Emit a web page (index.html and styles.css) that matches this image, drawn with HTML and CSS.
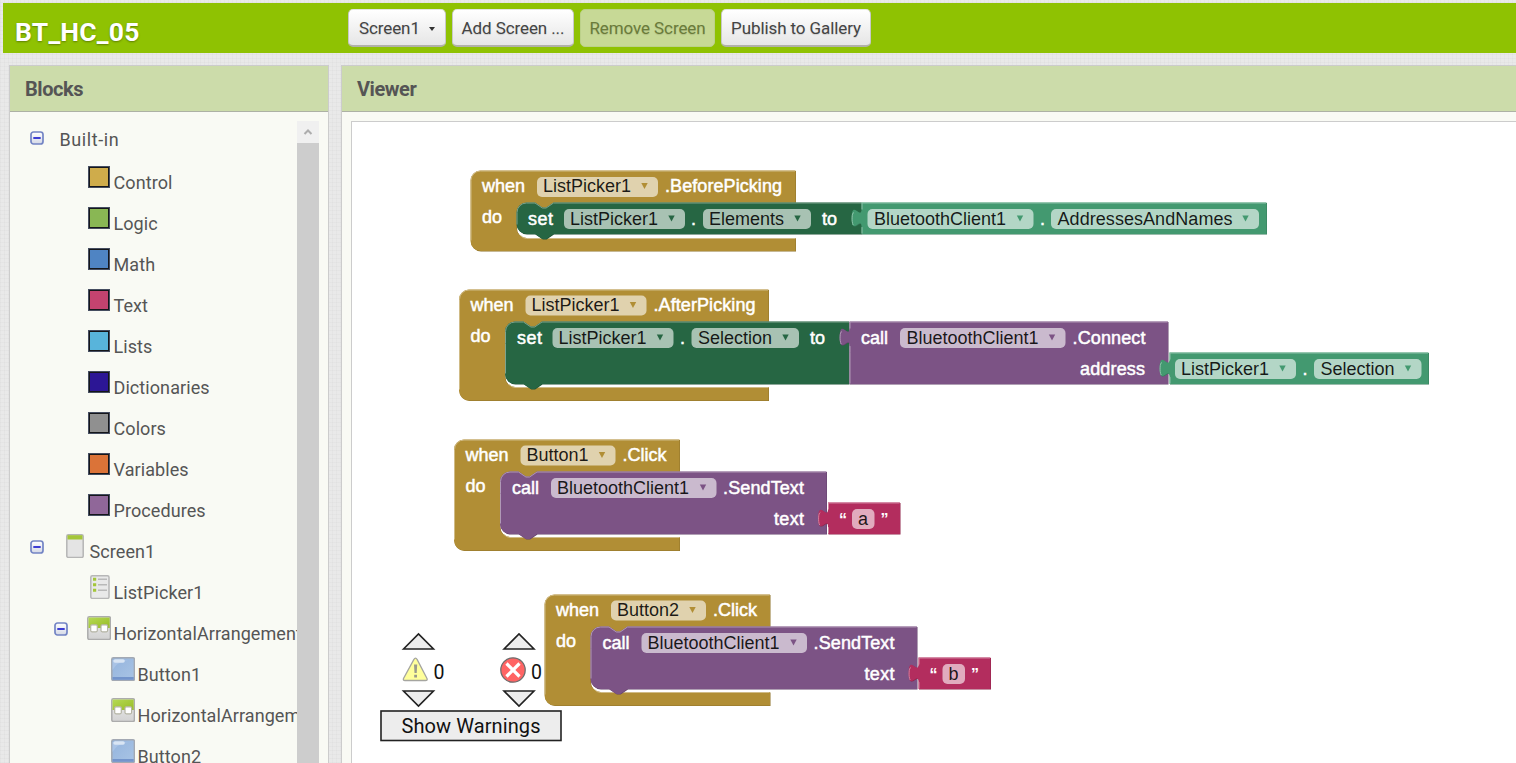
FILE: index.html
```html
<!DOCTYPE html>
<html lang="en">
<head>
<meta charset="utf-8">
<title>BT_HC_05</title>
<link rel="stylesheet" href="styles.css">
</head>
<body>
<svg class="defs" width="0" height="0" aria-hidden="true">
  <defs>
    <linearGradient id="g-green" x1="0" y1="0" x2="1" y2="1"><stop offset="0" stop-color="#b5da55"/><stop offset="1" stop-color="#98bb24"/></linearGradient>
    <linearGradient id="g-grey" x1="0" y1="0" x2="0" y2="1"><stop offset="0" stop-color="#ececec"/><stop offset="1" stop-color="#d2d2d2"/></linearGradient>
    <linearGradient id="g-blue" x1="0" y1="0" x2="1" y2="1"><stop offset="0" stop-color="#94b4dd"/><stop offset="1" stop-color="#a9c4e5"/></linearGradient>
    <linearGradient id="g-tog" x1="0" y1="0" x2="0" y2="1"><stop offset="0" stop-color="#fff"/><stop offset="1" stop-color="#d4d8e6"/></linearGradient>
    <symbol id="i-minus" viewBox="0 0 14 14"><rect x="1" y="1" width="12" height="12" rx="2.5" fill="url(#g-tog)" stroke="#7384c4" stroke-width="1.7"/><path d="M3.3 7H10.7" stroke="#2a2ad0" stroke-width="1.8"/></symbol>
    <symbol id="i-screen" viewBox="0 0 24 24"><rect x="3.8" y=".8" width="16.4" height="22.6" rx="1.5" fill="#e4e4e4" stroke="#b5b5b5" stroke-width="1.5"/><path d="M4.5 1.2h15v4.3h-15z" fill="#a4c639"/></symbol>
    <symbol id="i-list" viewBox="0 0 24 24"><rect x="3.8" y=".8" width="18.2" height="22.6" rx="1.5" fill="#e9e9e9" stroke="#b7b7b7" stroke-width="1.5"/><path d="M6 4.300h3.200M6 9.700h3.200M6 15.200h3.200" stroke="#a4c639" stroke-width="3"/><path d="M11 4.300h9M11 9.700h9M11 15.200h9" stroke="#b9b9b9" stroke-width="1.6"/></symbol>
    <symbol id="i-horiz" viewBox="0 0 24 24"><rect x=".8" y=".8" width="22.6" height="22.6" rx="1.5" fill="url(#g-grey)" stroke="#acacac" stroke-width="1.5"/><path d="M1.5 1.5h21.2v10.500H1.5z" fill="url(#g-green)"/><rect x="3.700" y="8.800" width="6.600" height="7" rx="1.200" fill="#fff" stroke="#b4b4a4" stroke-width="1.200"/><rect x="14" y="8.800" width="6.600" height="7" rx="1.200" fill="#fff" stroke="#b4b4a4" stroke-width="1.200"/></symbol>
    <symbol id="i-button" viewBox="0 0 24 24"><rect x=".8" y=".8" width="22.6" height="22.6" rx="1.5" fill="url(#g-blue)" stroke="#a3a9b3" stroke-width="1.5"/><path d="M1.5 13Q6 5 17 3H1.5z" fill="#a9c3e6"/><rect x="2.3" y="2.2" width="11.5" height="3.6" rx="1.8" fill="#d9e5f4"/><path d="M1.5 20h21.2v2.8H1.5z" fill="#7394cb"/></symbol>
  </defs>
</svg>

<header class="topbar">
  <h1 class="project">BT_HC_05</h1>
  <div class="btns">
    <button class="btn b1">Screen1 <i class="caret"></i></button>
    <button class="btn b2">Add Screen ...</button>
    <button class="btn b3 disabled">Remove Screen</button>
    <button class="btn b4">Publish to Gallery</button>
  </div>
</header>

<main class="work">
  <section class="panel blocks">
    <h2 class="panel-title">Blocks</h2>
    <div class="tree-wrap">
      <div class="tree">
        <div class="row root"><svg class="tog"><use href="#i-minus"/></svg><span>Built-in</span></div>
        <div class="row l2"><i class="sw control"></i><span>Control</span></div>
        <div class="row l2"><i class="sw logic"></i><span>Logic</span></div>
        <div class="row l2"><i class="sw math"></i><span>Math</span></div>
        <div class="row l2"><i class="sw text"></i><span>Text</span></div>
        <div class="row l2"><i class="sw lists"></i><span>Lists</span></div>
        <div class="row l2"><i class="sw dict"></i><span>Dictionaries</span></div>
        <div class="row l2"><i class="sw colors"></i><span>Colors</span></div>
        <div class="row l2"><i class="sw vars"></i><span>Variables</span></div>
        <div class="row l2"><i class="sw procs"></i><span>Procedures</span></div>
        <div class="row l1 open"><svg class="tog"><use href="#i-minus"/></svg><svg class="ico"><use href="#i-screen"/></svg><span>Screen1</span></div>
        <div class="row l2"><svg class="ico"><use href="#i-list"/></svg><span>ListPicker1</span></div>
        <div class="row l2 open"><svg class="tog"><use href="#i-minus"/></svg><svg class="ico"><use href="#i-horiz"/></svg><span>HorizontalArrangement1</span></div>
        <div class="row l3"><svg class="ico"><use href="#i-button"/></svg><span>Button1</span></div>
        <div class="row l3"><svg class="ico"><use href="#i-horiz"/></svg><span>HorizontalArrangement2</span></div>
        <div class="row l3"><svg class="ico"><use href="#i-button"/></svg><span>Button2</span></div>
      </div>
      <div class="scroll"><div class="scroll-up"><svg width="10" height="8" viewBox="0 0 10 8"><path d="M1.5 6L5 2.5L8.500 6" fill="none" stroke="#adadad" stroke-width="2"/></svg></div></div>
    </div>
  </section>

  <section class="panel viewer">
    <h2 class="panel-title">Viewer</h2>
    <div class="canvas">
      <svg class="workspace" width="1164" height="641" viewBox="352 122 1164 641">
        <defs>
          <path id="arr" d="M-3.200 -3H3.200L0 3z"/>
          <path id="frame1" d="M0 10A10 10 0 0 1 10 0H325V32.500H83l-7.400 5h-3.700l-7.400-5H56a10 10 0 0 0-10 10V57.500a10 10 0 0 0 10 10H325V80.500H10a10 10 0 0 1-10-10z"/>
          <path id="set1" d="M0 10A10 10 0 0 1 10 0H18.500l7.400 5h3.700l7.400-5H345V31.500H37l-7.400 5h-3.700l-7.400-5H10a10 10 0 0 1-10-10z"/>
          <path id="get1" d="M0 0H405V31.500H0V24.600c0-12.300-9.800 9.800-9.800-9.200s9.800 3.100 9.800-9.200z"/>
          <path id="frame2" d="M0 10A10 10 0 0 1 10 0H309.500V32H83l-7.400 5h-3.700l-7.400-5H56a10 10 0 0 0-10 10V87.500a10 10 0 0 0 10 10H309.500V111H10a10 10 0 0 1-10-10z"/>
          <path id="set2" d="M0 10A10 10 0 0 1 10 0H18.500l7.400 5h3.700l7.400-5H344V62.500H37l-7.400 5h-3.700l-7.400-5H10a10 10 0 0 1-10-10z"/>
          <path id="call2" d="M0 0H318.500V62.500H0V24.600c0-12.300-9.800 9.800-9.800-9.200s9.800 3.100 9.800-9.200z"/>
          <path id="get2" d="M0 0H259V31.500H0V24.600c0-12.300-9.800 9.800-9.800-9.200s9.800 3.100 9.800-9.200z"/>
          <path id="frame3" d="M0 10A10 10 0 0 1 10 0H225.500V32H83l-7.400 5h-3.700l-7.400-5H56a10 10 0 0 0-10 10V87.500a10 10 0 0 0 10 10H225.500V111H10a10 10 0 0 1-10-10z"/>
          <path id="call3" d="M0 10A10 10 0 0 1 10 0H18.500l7.400 5h3.700l7.400-5H326.500V62.500H37l-7.400 5h-3.700l-7.400-5H10a10 10 0 0 1-10-10z"/>
          <path id="str" d="M0 0H72V31.500H0V24.600c0-12.300-9.800 9.800-9.800-9.200s9.800 3.100 9.800-9.200z"/>
          <path id="tabhi" d="M.5 31V24.600M-8.300 22.500C-9.300 20.500-9.500 18-9.400 15.400C-9.300 12-8.800 10.500-7.600 9.900M.5 7V.5"/>
          <path id="in1" d="M.5 22V10A9.500 9.500 0 0 1 10 .5H18.500l7.400 5h3.700l7.400-5"/>
        </defs>

        <!-- warning indicators -->
        <g class="ind">
          <path d="M403.500 649L418.500 634L433.500 649zM403.500 691H433.500L418.500 706zM504 649L519 634L534 649zM504 691H534L519 706z"/>
          <rect x="381" y="711" width="180" height="29.500"/>
        </g>
        <path d="M413.800 659.600q1.700-2.800 3.400 0L427 678.500q.8 2-1.500 2H405q-2.200 0-1.500-2z" fill="#ffff9b" stroke="#a5a5a0" stroke-width="1.300"/>
        <path d="M414 664.500h3.200l-.5 8.500h-2.200zM414.200 674.800h2.800v2.800h-2.800z" fill="#9a9a8c"/>
        <circle cx="513" cy="670" r="12.200" fill="#ff6464" stroke="#6e6e6e" stroke-width="1.300"/>
        <path d="M506.500 663.500L519.500 676.500M519.500 663.500L506.500 676.500" stroke="#fff" stroke-width="3.200"/>
        <text class="rb" x="433.500" y="679" textLength="11" lengthAdjust="spacingAndGlyphs">0</text>
        <text class="rb" x="531" y="679" textLength="11" lengthAdjust="spacingAndGlyphs">0</text>
        <text class="rb" x="401.500" y="733" textLength="139">Show Warnings</text>

        <!-- ListPicker1.BeforePicking -->
        <g transform="translate(470.500 170.500)">
          <use href="#frame1" class="gold-d" x=".5" y=".5"/><use href="#frame1" class="gold"/>
          <path class="hi gold-h" d="M.5 70V10A9.500 9.500 0 0 1 10 .5H324.500M50 65a9 9 0 0 0 6 3H324.500"/>
          <text class="w" x="11.500" y="21.500" textLength="43">when</text>
          <rect class="pill" x="66.500" y="6.500" width="121" height="20" rx="5"/><text class="k" x="72.500" y="21.500" textLength="88">ListPicker1</text><use href="#arr" class="gold" x="174" y="15.500"/>
          <text class="w" x="194.500" y="21.500" textLength="117">.BeforePicking</text>
          <text class="w" x="11.500" y="52.500">do</text>
          <g transform="translate(46 32)">
            <use href="#set1" class="dk-d" x=".5" y=".5"/><use href="#set1" class="dk"/><use href="#in1" class="hi dk-h"/><path class="hi dk-h" d="M37 .5H345"/>
            <text class="w" x="11.500" y="22" textLength="25">set</text>
            <rect class="pill" x="47.500" y="6.500" width="121" height="20" rx="5"/><text class="k" x="53.500" y="22" textLength="88">ListPicker1</text><use href="#arr" class="dk" x="155" y="16"/>
            <text class="w" x="174.500" y="22">.</text>
            <rect class="pill" x="186.500" y="6.500" width="108" height="20" rx="5"/><text class="k" x="192.500" y="22" textLength="75">Elements</text><use href="#arr" class="dk" x="281" y="16"/>
            <text class="w" x="305.500" y="22">to</text>
            <g transform="translate(345)">
              <use href="#get1" class="lt-d" x=".5" y=".5"/><use href="#get1" class="lt"/><use href="#tabhi" class="hi lt-h"/><path class="hi lt-h" d="M0 .5H404.500"/>
              <rect class="pill" x="6" y="6.500" width="166" height="20" rx="5"/><text class="k" x="12.500" y="22" textLength="132">BluetoothClient1</text><use href="#arr" class="lt" x="158.500" y="16"/>
              <text class="w" x="178.500" y="22">.</text>
              <rect class="pill" x="189.500" y="6.500" width="208" height="20" rx="5"/><text class="k" x="196" y="22" textLength="175">AddressesAndNames</text><use href="#arr" class="lt" x="384" y="16"/>
            </g>
          </g>
        </g>

        <!-- ListPicker1.AfterPicking -->
        <g transform="translate(459 289.500)">
          <use href="#frame2" class="gold-d" x=".5" y=".5"/><use href="#frame2" class="gold"/>
          <path class="hi gold-h" d="M.5 100V10A9.500 9.500 0 0 1 10 .5H309M50 95a9 9 0 0 0 6 3H309"/>
          <text class="w" x="11.500" y="21.500" textLength="43">when</text>
          <rect class="pill" x="66.500" y="6" width="121" height="20" rx="5"/><text class="k" x="72.500" y="21.500" textLength="88">ListPicker1</text><use href="#arr" class="gold" x="174" y="15.500"/>
          <text class="w" x="194.500" y="21.500" textLength="102">.AfterPicking</text>
          <text class="w" x="11.500" y="52.500">do</text>
          <g transform="translate(46 32)">
            <use href="#set2" class="dk-d" x=".5" y=".5"/><use href="#set2" class="dk"/><use href="#in1" class="hi dk-h"/><path class="hi dk-h" d="M.5 22V52M37 .5H344"/>
            <text class="w" x="12" y="22.500" textLength="25">set</text>
            <rect class="pill" x="47.500" y="6.500" width="121" height="20" rx="5"/><text class="k" x="53.500" y="22.500" textLength="88">ListPicker1</text><use href="#arr" class="dk" x="155" y="16"/>
            <text class="w" x="175" y="22.500">.</text>
            <rect class="pill" x="186.500" y="6.500" width="107.500" height="20" rx="5"/><text class="k" x="193" y="22.500" textLength="74">Selection</text><use href="#arr" class="dk" x="280.500" y="16"/>
            <text class="w" x="305" y="22.500">to</text>
            <g transform="translate(344.500)">
              <use href="#call2" class="pu-d" x=".5" y=".5"/><use href="#call2" class="pu"/><use href="#tabhi" class="hi pu-h"/><path class="hi pu-h" d="M.5 31V62M0 .5H318"/>
              <text class="w" x="11.500" y="22.500">call</text>
              <rect class="pill" x="50.500" y="6.500" width="165.500" height="20" rx="5"/><text class="k" x="57" y="22.500" textLength="132">BluetoothClient1</text><use href="#arr" class="pu" x="202.500" y="16"/>
              <text class="w" x="223" y="22.500" textLength="73">.Connect</text>
              <text class="w" x="230.500" y="53.500" textLength="65">address</text>
              <g transform="translate(320 31)">
                <use href="#get2" class="lt-d" x=".5" y=".5"/><use href="#get2" class="lt"/><use href="#tabhi" class="hi lt-h"/><path class="hi lt-h" d="M0 .5H258.500"/>
                <rect class="pill" x="5.500" y="6.500" width="121" height="20" rx="5"/><text class="k" x="11.500" y="22.500" textLength="88">ListPicker1</text><use href="#arr" class="lt" x="113" y="16"/>
                <text class="w" x="133" y="22.500">.</text>
                <rect class="pill" x="144.500" y="6.500" width="107.500" height="20" rx="5"/><text class="k" x="151" y="22.500" textLength="74">Selection</text><use href="#arr" class="lt" x="238.500" y="16"/>
              </g>
            </g>
          </g>
        </g>

        <!-- Button1.Click -->
        <g transform="translate(454 439.500)">
          <use href="#frame3" class="gold-d" x=".5" y=".5"/><use href="#frame3" class="gold"/>
          <path class="hi gold-h" d="M.5 100V10A9.500 9.500 0 0 1 10 .5H225M50 95a9 9 0 0 0 6 3H225"/>
          <text class="w" x="11.500" y="21.500" textLength="43">when</text>
          <rect class="pill" x="66.500" y="6" width="95" height="20" rx="5"/><text class="k" x="72.500" y="21.500" textLength="62">Button1</text><use href="#arr" class="gold" x="148" y="15.500"/>
          <text class="w" x="168.500" y="21.500" textLength="44">.Click</text>
          <text class="w" x="11.500" y="52.500">do</text>
          <g transform="translate(46 32)">
            <use href="#call3" class="pu-d" x=".5" y=".5"/><use href="#call3" class="pu"/><use href="#in1" class="hi pu-h"/><path class="hi pu-h" d="M.5 22V52M37 .5H326"/>
            <text class="w" x="12" y="22.500">call</text>
            <rect class="pill" x="51" y="6.500" width="165.500" height="20" rx="5"/><text class="k" x="57" y="22.500" textLength="132">BluetoothClient1</text><use href="#arr" class="pu" x="203" y="16"/>
            <text class="w" x="223" y="22.500" textLength="81">.SendText</text>
            <text class="w" x="274" y="53.500" textLength="30">text</text>
            <g transform="translate(328 31)">
              <use href="#str" class="pk-d" x=".5" y=".5"/><use href="#str" class="pk"/><use href="#tabhi" class="hi pk-h"/><path class="hi pk-h" d="M0 .5H71.500"/>
              <text class="q" x="11" y="22.500">“</text><rect class="pill" x="24" y="6.500" width="22.500" height="20" rx="5"/><text class="k" x="30" y="22.500">a</text><text class="q" x="52.500" y="22.500">”</text>
            </g>
          </g>
        </g>

        <!-- Button2.Click -->
        <g transform="translate(544.500 594.500)">
          <use href="#frame3" class="gold-d" x=".5" y=".5"/><use href="#frame3" class="gold"/>
          <path class="hi gold-h" d="M.5 100V10A9.500 9.500 0 0 1 10 .5H225M50 95a9 9 0 0 0 6 3H225"/>
          <text class="w" x="11.500" y="21.500" textLength="43">when</text>
          <rect class="pill" x="66.500" y="6" width="95" height="20" rx="5"/><text class="k" x="72.500" y="21.500" textLength="62">Button2</text><use href="#arr" class="gold" x="148" y="15.500"/>
          <text class="w" x="168.500" y="21.500" textLength="44">.Click</text>
          <text class="w" x="11.500" y="52.500">do</text>
          <g transform="translate(46 32)">
            <use href="#call3" class="pu-d" x=".5" y=".5"/><use href="#call3" class="pu"/><use href="#in1" class="hi pu-h"/><path class="hi pu-h" d="M.5 22V52M37 .5H326"/>
            <text class="w" x="12" y="22.500">call</text>
            <rect class="pill" x="51" y="6.500" width="165.500" height="20" rx="5"/><text class="k" x="57" y="22.500" textLength="132">BluetoothClient1</text><use href="#arr" class="pu" x="203" y="16"/>
            <text class="w" x="223" y="22.500" textLength="81">.SendText</text>
            <text class="w" x="274" y="53.500" textLength="30">text</text>
            <g transform="translate(328 31)">
              <use href="#str" class="pk-d" x=".5" y=".5"/><use href="#str" class="pk"/><use href="#tabhi" class="hi pk-h"/><path class="hi pk-h" d="M0 .5H71.500"/>
              <text class="q" x="11" y="22.500">“</text><rect class="pill" x="24" y="6.500" width="22.500" height="20" rx="5"/><text class="k" x="30" y="22.500">b</text><text class="q" x="52.500" y="22.500">”</text>
            </g>
          </g>
        </g>
      </svg>
    </div>
  </section>
</main>
</body>
</html>
```
FILE: styles.css
```css
* { box-sizing: border-box; }
html, body { height: 100%; }
body {
  margin: 0;
  padding: 3px 0 0 3px;
  overflow: hidden;
  display: flex;
  flex-direction: column;
  font-family: Roboto, sans-serif;
  background-color: #e9e9e9;
  background-image:
    repeating-linear-gradient(90deg, rgba(0,0,0,.02) 0 1px, transparent 1px 4px),
    repeating-linear-gradient(0deg, rgba(0,0,0,.02) 0 1px, transparent 1px 4px);
}
.defs { position: absolute; }

.topbar {
  flex: none;
  height: 50px;
  padding-left: 12px;
  display: flex;
  background: #8fc202;
}
.project {
  width: 333px;
  margin: 0;
  padding-top: 4px;
  font-size: 26.500px;
  line-height: 50px;
  font-weight: 700;
  letter-spacing: .2px;
  color: #fff;
  text-shadow: 0 1px 2px rgba(0,0,0,.35);
}
.btns { display: flex; gap: 6px; padding-top: 6px; }
.btn {
  height: 38px;
  padding: 1px 0 0;
  border: 1px solid #c8c8c8;
  border-top-color: #e4e4e4;
  border-bottom: 2px solid #b1b1a8;
  border-radius: 5px;
  background: linear-gradient(#fff, #e6e6e6);
  color: #444;
  font: 400 17px Roboto, sans-serif;
  letter-spacing: -.1px;
  text-shadow: 0 1px 1px rgba(0,0,0,.12);
  white-space: nowrap;
}
.b1 { width: 98px; }
.b2 { width: 122px; }
.b3 { width: 135px; }
.b4 { width: 150px; }
.btn.disabled { background: #c7d996; border-color: #bcd18a; border-width: 1px; padding: 0; color: #6a7b3a; }
.caret {
  display: inline-block;
  margin-left: 5px;
  vertical-align: 3px;
  border: 3.500px solid transparent;
  border-top: 4.500px solid #333;
  border-bottom: 0;
}

.work {
  flex: 1;
  min-height: 0;
  display: flex;
  gap: 12px;
  padding: 12px 0 0 6px;
}
.panel {
  display: flex;
  flex-direction: column;
  border: 1px solid #ccc;
  border-bottom: 0;
  background: #f9faf4;
}
.blocks { width: 320px; flex: none; }
.viewer { flex: 1; min-width: 0; border-right: 0; }
.panel-title {
  flex: none;
  height: 46px;
  margin: 0;
  padding-left: 15px;
  border-bottom: 1px solid #adb1a5;
  background: #ccdcaa;
  color: #555;
  font-size: 20px;
  line-height: 47px;
  font-weight: 700;
  letter-spacing: -.45px;
}
.tree-wrap { flex: 1; min-height: 0; display: flex; padding: 9px 9px 0 0; }
.tree { flex: 1; min-width: 0; overflow: hidden; margin-top: -2px; }
.row {
  height: 41px;
  display: flex;
  align-items: flex-start;
  white-space: nowrap;
  color: #555;
  font-size: 18px;
  letter-spacing: .08px;
}
.row span { line-height: 46px; margin-left: -.5px; }
.tog { flex: none; width: 14px; height: 14px; margin: 11px 19px 0 0; }
.ico { flex: none; width: 24px; height: 24px; margin: 5px 3px 0 0; }
.root { padding-left: 20px; letter-spacing: .6px; }
.root .tog { margin: 12px 16px 0 0; }
.root span { line-height: 42px; }
.l2 { padding-left: 77px; }
.l3 { padding-left: 101px; }
.l1.open { padding-left: 20px; }
.l2.open { padding-left: 44px; }
.sw {
  flex: none;
  width: 22px;
  height: 22px;
  margin: 6px 4px 0 1px;
  border: 2px solid #15161a;
  outline: 1px solid rgba(160,180,230,.35);
  outline-offset: -1px;
}
.control { background: #cfac4b; }
.logic { background: #89b754; }
.math { background: #4f84c3; }
.text { background: #c4436f; }
.lists { background: #58b4db; }
.dict { background: #2c1695; }
.colors { background: #909090; }
.vars { background: #db7338; }
.procs { background: #906799; }

.scroll { flex: none; width: 22px; background: #cdcdcd; }
.scroll-up { height: 22px; background: #f0f0f0; display: flex; align-items: center; justify-content: center; }

.canvas { flex: 1; min-height: 0; margin: 9px 0 0 9px; border: 1px solid #ccc; border-width: 1px 0 0 1px; background: #fff; overflow: hidden; }
.workspace { display: block; font: 18px "Liberation Sans", Arial, sans-serif; }
.workspace .w { fill: #fff; stroke: #fff; stroke-width: .5px; }
.workspace .q { fill: #fff; font-weight: 700; font-size: 16px; }
.workspace .k { fill: #000; fill-opacity: .88; }
.pill { fill: #fff; fill-opacity: .6; }
.hi { fill: none; stroke-width: 1px; }
.gold { fill: #b18e35; } .gold-d { fill: #8e722a; } .gold-h { stroke: #d0bb86; }
.dk { fill: #266643; } .dk-d { fill: #1e5236; } .dk-h { stroke: #7da38e; }
.lt { fill: #439970; } .lt-d { fill: #367a5a; } .lt-h { stroke: #8ec2a9; }
.pu { fill: #7c5385; } .pu-d { fill: #63426a; } .pu-h { stroke: #b098b6; }
.pk { fill: #b32d5e; } .pk-d { fill: #8f244b; } .pk-h { stroke: #d1819e; }
.ind { fill: #ededed; stroke: #222; stroke-width: 1.600px; }
.rb { font: 20px Roboto, sans-serif; fill: #111; }
```
